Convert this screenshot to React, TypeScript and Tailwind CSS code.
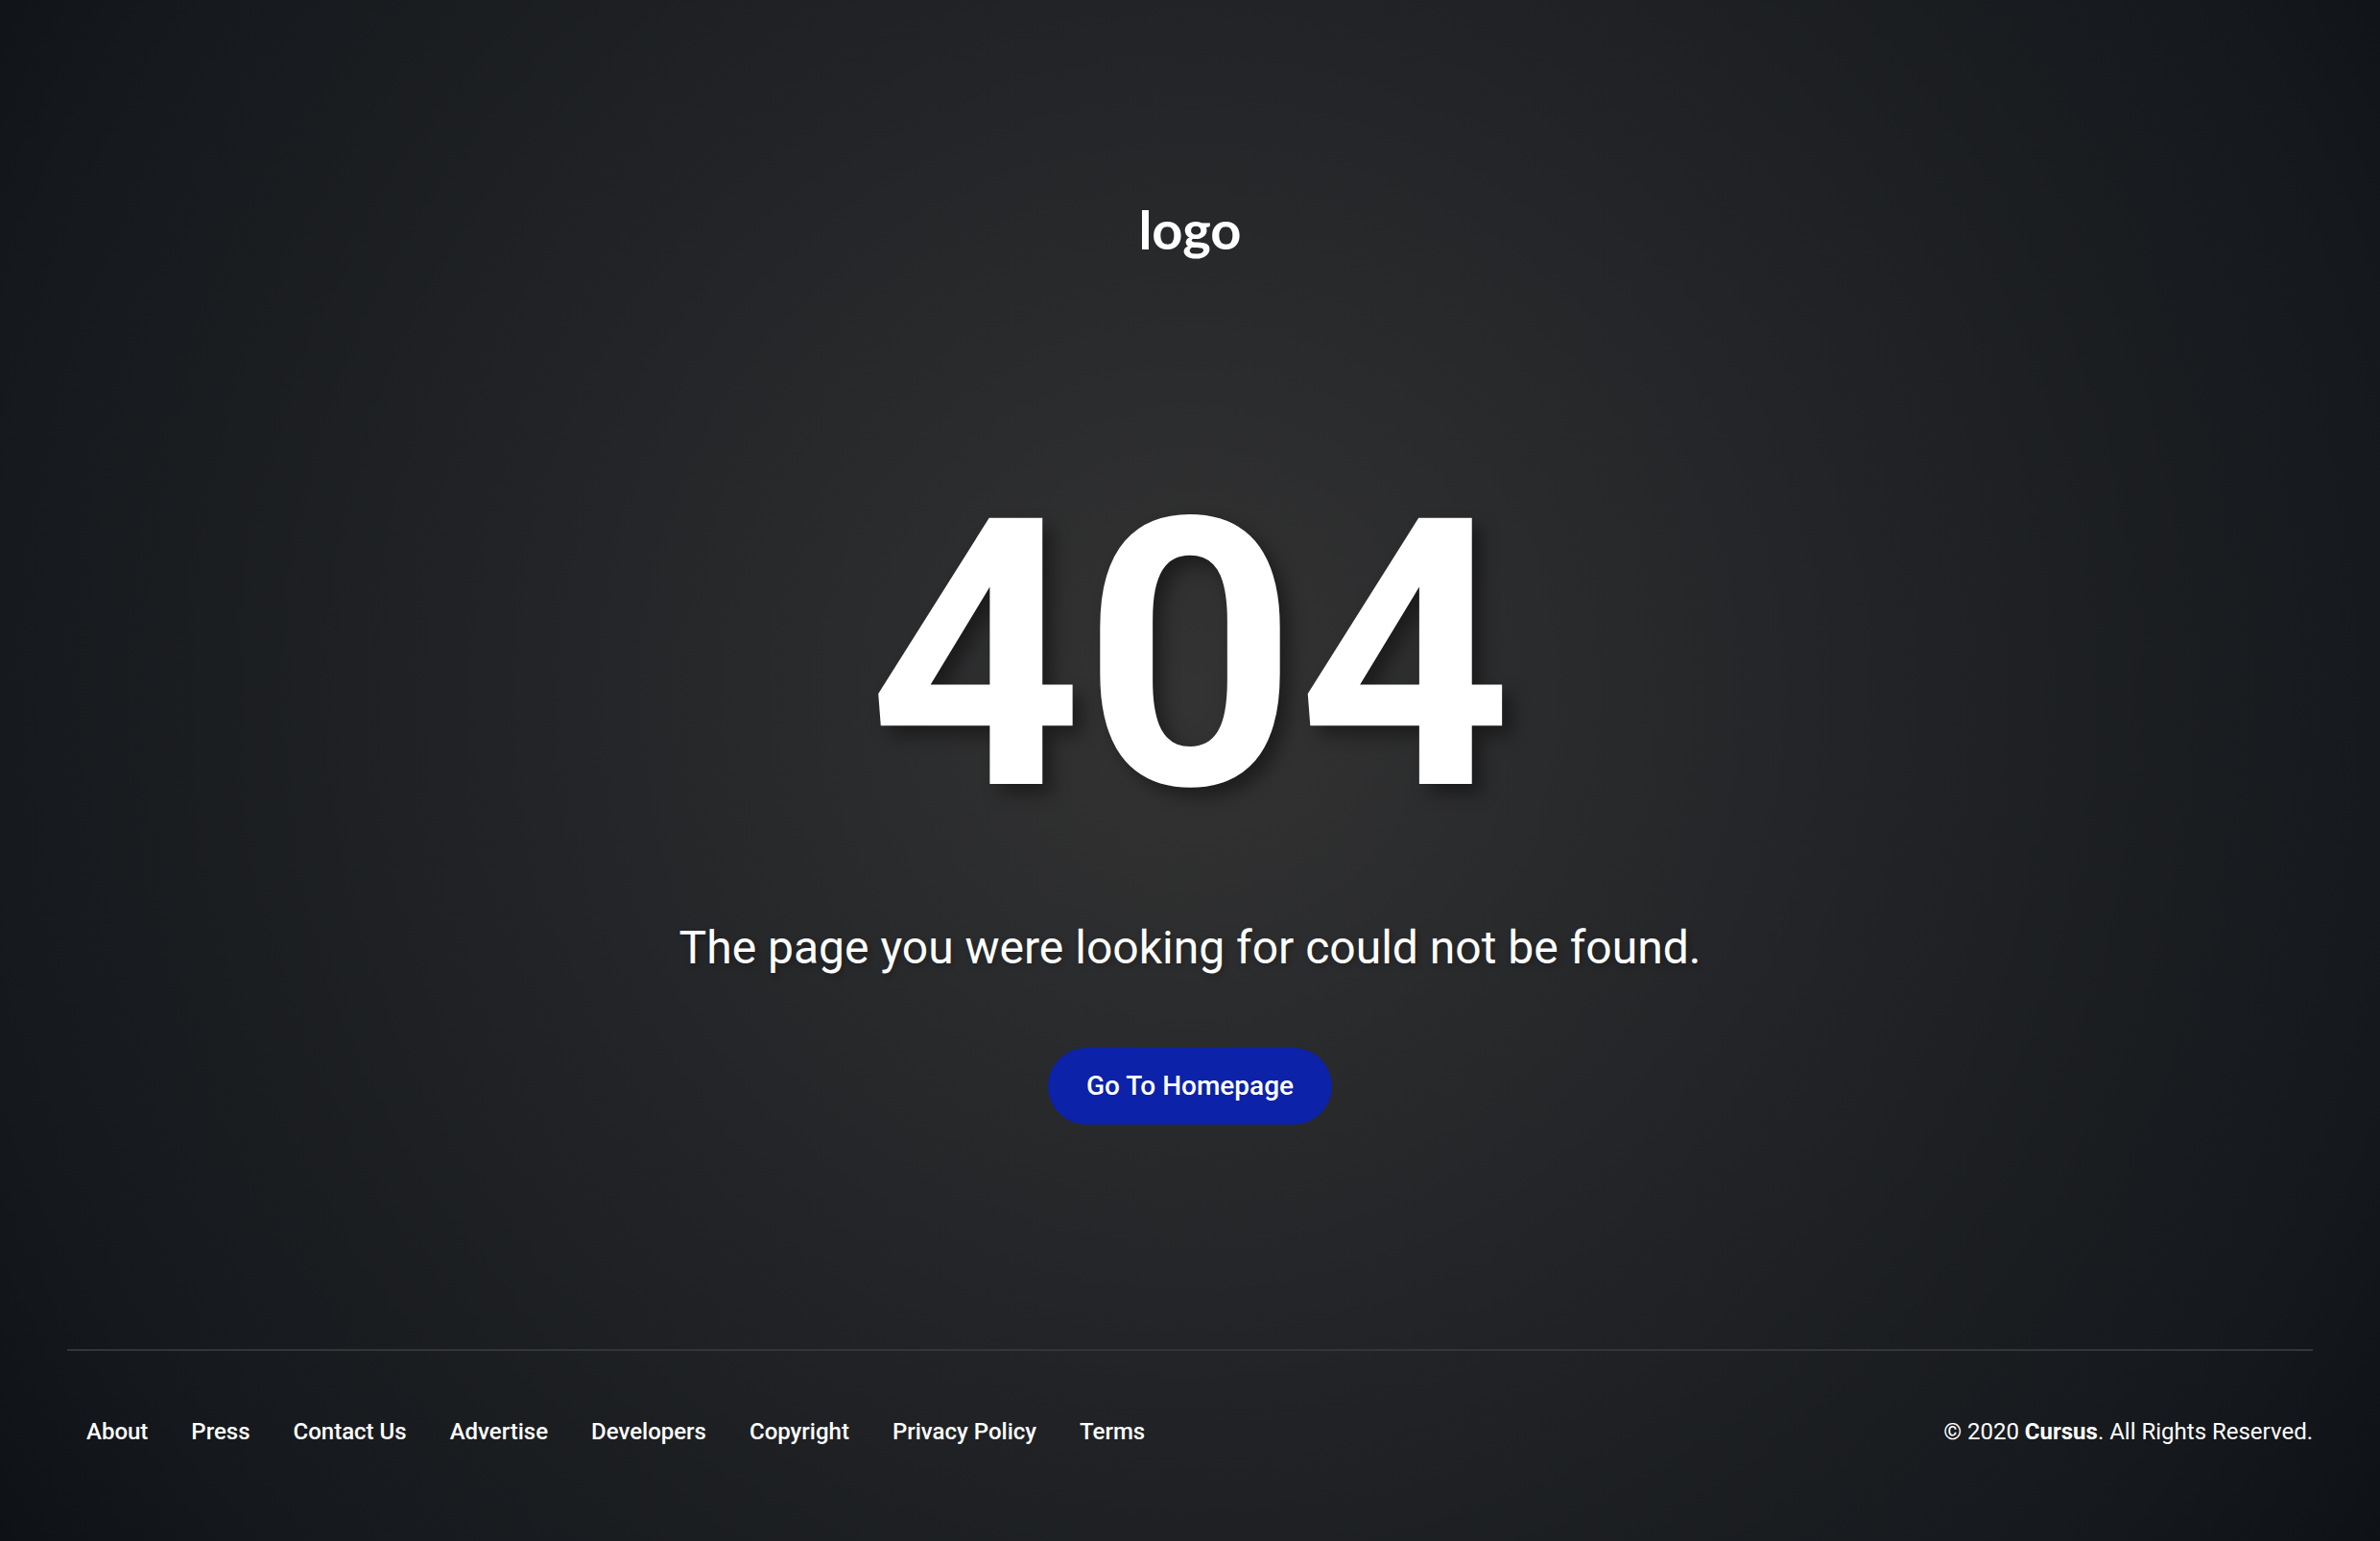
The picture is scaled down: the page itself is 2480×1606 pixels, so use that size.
const links = ["About", "Press", "Contact Us", "Advertise", "Developers", "Copyright", "Privacy Policy", "Terms"];

export default function App() {
  return (
    <div className="min-h-screen flex flex-col text-white font-['Roboto',sans-serif] bg-[radial-gradient(circle_at_50%_45%,#333333_0%,#28292b_30%,#222427_45%,#15181c_85%,#0e1116_100%)]">
      <main className="flex-1 flex flex-col items-center">
        {/* logo */}
        <div className="pt-[211px] font-['Lato',sans-serif] font-bold text-[56px] leading-none">logo</div>

        {/* 404 */}
        <h1 className="mt-[222px] text-[390px] leading-none font-bold [text-shadow:10px_10px_18px_rgba(0,0,0,0.4)]">404</h1>

        <p className="mt-[73px] text-[48px] leading-[72px] [text-shadow:2px_3px_6px_rgba(0,0,0,0.25)]">
          The page you were looking for could not be found.
        </p>

        <button className="mt-[68px] w-[296px] h-[80px] rounded-full bg-[#0b22a9] flex items-center justify-center text-[28px] font-medium">
          Go To Homepage
        </button>
      </main>

      <footer className="mx-[70px] border-t-2 border-[#333538] pt-[66px] pb-[96px] flex items-center justify-between">
        <nav className="flex items-center gap-[45px] pl-[20px]">
          {links.map((l) => (
            <a key={l} href="#" className="text-[24px] leading-[36px] font-medium">
              {l}
            </a>
          ))}
        </nav>
        <p className="text-[24px] leading-[36px]">
          © 2020 <span className="font-bold">Cursus</span>. All Rights Reserved.
        </p>
      </footer>
    </div>
  );
}
